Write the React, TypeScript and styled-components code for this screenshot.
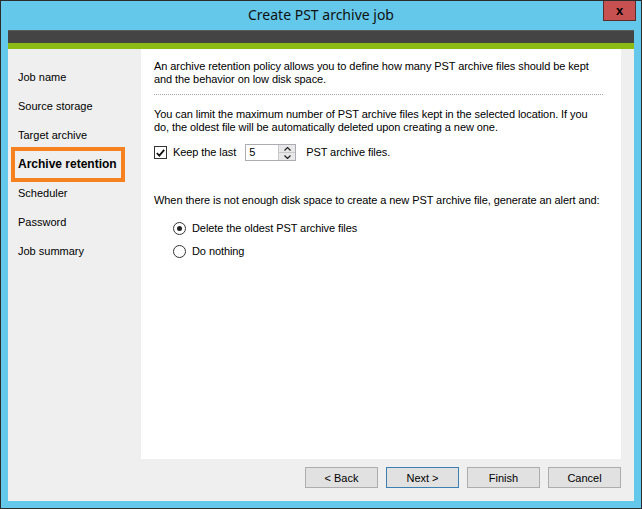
import React, { useState } from 'react';
import styled, { createGlobalStyle } from 'styled-components';

const GlobalStyle = createGlobalStyle`
    html, body {
        margin: 0;
        padding: 0;
        background: #63c8ea;
    }
    * {
        box-sizing: border-box;
    }
`;

const Window_Frame = styled.div`
    width: 642px;
    height: 509px;
    border: 1px solid #2c2c2c;
    background: #63c8ea;
    display: flex;
    flex-direction: column;
    font-family: 'Liberation Sans', Arial, sans-serif;
    font-size: 11px;
    color: #000;
`;

const Title_Bar = styled.div`
    height: 29px;
    display: grid;
    grid-template-columns: 1fr auto 1fr;
    align-items: start;
`;

const Txt_Title = styled.div`
    grid-column: 2;
    font-family: 'Noto Sans', 'Open Sans', sans-serif;
    font-size: 14px;
    line-height: 28px;
    color: #111;
`;

const Button_Close = styled.div`
    grid-column: 3;
    justify-self: end;
    margin-right: 5px;
    width: 33px;
    height: 20px;
    background: #c75050;
    border: 1px solid #5e2a2a;
    border-top: none;
    display: flex;
    align-items: center;
    justify-content: center;
    font-family: 'Liberation Sans', Arial, sans-serif;
    font-weight: bold;
    font-size: 13px;
    color: #000;
`;

const Client_Area = styled.div`
    flex: 1;
    margin: 0 7px 7px 7px;
    background: #efefef;
    display: flex;
    flex-direction: column;
`;

const Band_Dark = styled.div`
    height: 13px;
    background: #444444;
    border-top: 1px solid #5a5a5a;
`;

const Band_Green = styled.div`
    height: 6px;
    background: #8cbb13;
`;

const Body_Row = styled.div`
    flex: 1;
    display: flex;
`;

const Nav_Panel = styled.div`
    width: 133px;
    flex-shrink: 0;
    padding-top: 14px;
    display: flex;
    flex-direction: column;
`;

const Nav_Item = styled.div<{ $active?: boolean }>`
    position: relative;
    height: 29px;
    line-height: 29px;
    padding-left: 10px;
    font-size: ${(p) => (p.$active ? '12px' : '11px')};
    font-weight: ${(p) => (p.$active ? 'bold' : 'normal')};
    white-space: nowrap;

    &::after {
        content: '';
        display: ${(p) => (p.$active ? 'block' : 'none')};
        position: absolute;
        left: 3px;
        right: 16px;
        top: -3px;
        bottom: -3px;
        border: 4px solid #f5821f;
    }
`;

const Main_Column = styled.div`
    flex: 1;
    min-width: 0;
    display: flex;
    flex-direction: column;
    padding-right: 13px;
`;

const Content_Panel = styled.div`
    flex: 1;
    background: #ffffff;
    padding: 11px 18px 0 13px;
    line-height: 13px;
    letter-spacing: -0.08px;
    white-space: nowrap;
    overflow: hidden;
`;

const Txt_Paragraph = styled.p`
    margin: 0;
`;

const Divider_Dotted = styled.div`
    margin: 8px 0 13px 0;
    border-top: 1px dotted #a8a8a8;
`;

const Row_Keep = styled.div`
    display: flex;
    align-items: center;
    margin-top: 10px;
    height: 17px;
`;

const Box_Check = styled.span`
    width: 13px;
    height: 13px;
    border: 1px solid #333;
    background: #fff;
    display: flex;
    align-items: center;
    justify-content: center;
    margin-right: 6px;
`;

const Txt_Inline = styled.span<{ $before?: number; $after?: number }>`
    margin-left: ${(p) => p.$before ?? 0}px;
    margin-right: ${(p) => p.$after ?? 0}px;
`;

const Spin_Box = styled.div`
    width: 51px;
    height: 17px;
    border: 1px solid #abadb3;
    display: flex;
    background: #fff;
`;

const Input_Spin = styled.div`
    flex: 1;
    padding-left: 3px;
    line-height: 15px;
`;

const Spin_Buttons = styled.div`
    width: 17px;
    display: flex;
    flex-direction: column;
    border-left: 1px solid #c8c8c8;
`;

const Spin_Button = styled.div<{ $top?: boolean }>`
    flex: 1;
    background: #e8e8e8;
    border-bottom: ${(p) => (p.$top ? '1px solid #c8c8c8' : 'none')};
    display: flex;
    align-items: center;
    justify-content: center;
`;

const Txt_Question = styled.p`
    margin: 33px 0 0 0;
`;

const Radio_Group = styled.div`
    margin-top: 15px;
    padding-left: 19px;
    display: flex;
    flex-direction: column;
    gap: 10px;
`;

const Radio_Row = styled.div`
    display: flex;
    align-items: center;
    height: 13px;
`;

const Circle_Radio = styled.span<{ $checked?: boolean }>`
    width: 13px;
    height: 13px;
    border-radius: 50%;
    border: 1px solid #333;
    background: #fff;
    margin-right: 6px;
    display: flex;
    align-items: center;
    justify-content: center;

    &::after {
        content: '';
        display: ${(p) => (p.$checked ? 'block' : 'none')};
        width: 5px;
        height: 5px;
        border-radius: 50%;
        background: #222;
    }
`;

const Footer_Buttons = styled.div`
    height: 42px;
    padding: 8px 0 13px 0;
    display: flex;
    justify-content: flex-end;
    gap: 8px;
`;

const Button_Wizard = styled.button<{ $focused?: boolean }>`
    width: 73px;
    height: 21px;
    padding: 0;
    font-family: 'Liberation Sans', Arial, sans-serif;
    font-size: 11px;
    color: #000;
    background: #e1e1e1;
    border: 1px solid ${(p) => (p.$focused ? '#3c7fb1' : '#adadad')};
    border-radius: 0;
`;

const steps = ['Job name', 'Source storage', 'Target archive', 'Archive retention', 'Scheduler', 'Password', 'Job summary'];

const Arrow = ({ up }: { up?: boolean }) => (
    <svg width="7" height="4" viewBox="0 0 7 4">
        <path d={up ? 'M0.5 3.5 L3.5 0.5 L6.5 3.5' : 'M0.5 0.5 L3.5 3.5 L6.5 0.5'} fill="none" stroke="#222" strokeWidth="1.2" />
    </svg>
);

function App() {
    const [keepCount] = useState(5);
    const [choice, setChoice] = useState<'delete' | 'nothing'>('delete');

    return (
        <>
            <GlobalStyle />
            <Window_Frame>
                <Title_Bar>
                    <Txt_Title>Create PST archive job</Txt_Title>
                    <Button_Close>x</Button_Close>
                </Title_Bar>
                <Client_Area>
                    <Band_Dark />
                    <Band_Green />
                    <Body_Row>
                        <Nav_Panel>
                            {steps.map((s) => (
                                <Nav_Item key={s} $active={s === 'Archive retention'}>
                                    {s}
                                </Nav_Item>
                            ))}
                        </Nav_Panel>
                        <Main_Column>
                            <Content_Panel>
                                <Txt_Paragraph>
                                    An archive retention policy allows you to define how many PST archive files should be kept
                                    <br />
                                    and the behavior on low disk space.
                                </Txt_Paragraph>
                                <Divider_Dotted />
                                <Txt_Paragraph>
                                    You can limit the maximum number of PST archive files kept in the selected location. If you
                                    <br />
                                    do, the oldest file will be automatically deleted upon creating a new one.
                                </Txt_Paragraph>
                                <Row_Keep>
                                    <Box_Check>
                                        <svg width="9" height="8" viewBox="0 0 9 8">
                                            <path d="M0.8 4 L3.3 6.6 L8.2 0.8" fill="none" stroke="#111" strokeWidth="1.8" />
                                        </svg>
                                    </Box_Check>
                                    <Txt_Inline $after={9}>Keep the last</Txt_Inline>
                                    <Spin_Box>
                                        <Input_Spin>{keepCount}</Input_Spin>
                                        <Spin_Buttons>
                                            <Spin_Button $top>
                                                <Arrow up />
                                            </Spin_Button>
                                            <Spin_Button>
                                                <Arrow />
                                            </Spin_Button>
                                        </Spin_Buttons>
                                    </Spin_Box>
                                    <Txt_Inline $before={10}>PST archive files.</Txt_Inline>
                                </Row_Keep>
                                <Txt_Question>
                                    When there is not enough disk space to create a new PST archive file, generate an alert and:
                                </Txt_Question>
                                <Radio_Group>
                                    <Radio_Row onClick={() => setChoice('delete')}>
                                        <Circle_Radio $checked={choice === 'delete'} />
                                        Delete the oldest PST archive files
                                    </Radio_Row>
                                    <Radio_Row onClick={() => setChoice('nothing')}>
                                        <Circle_Radio $checked={choice === 'nothing'} />
                                        Do nothing
                                    </Radio_Row>
                                </Radio_Group>
                            </Content_Panel>
                            <Footer_Buttons>
                                <Button_Wizard>&lt; Back</Button_Wizard>
                                <Button_Wizard $focused>Next &gt;</Button_Wizard>
                                <Button_Wizard>Finish</Button_Wizard>
                                <Button_Wizard>Cancel</Button_Wizard>
                            </Footer_Buttons>
                        </Main_Column>
                    </Body_Row>
                </Client_Area>
            </Window_Frame>
        </>
    );
}

export default App;
